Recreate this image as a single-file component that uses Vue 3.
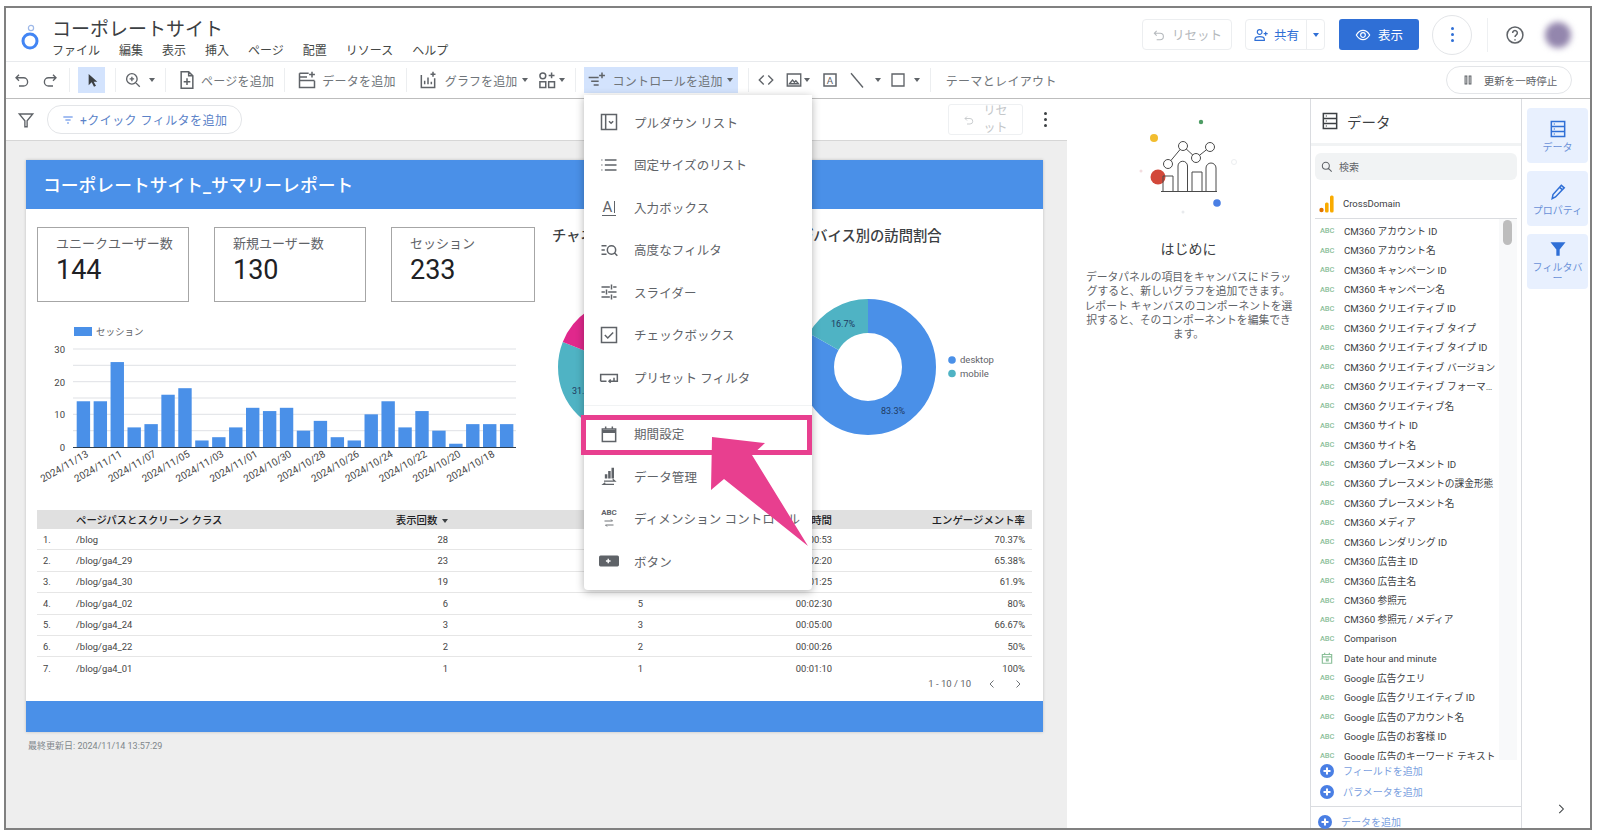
<template>
  <div class="page">
    <div class="frame">
      <header class="top">
        <svg class="logo" viewBox="0 0 24 32">
          <circle cx="12" cy="20" r="7" fill="none" stroke="#4285f4" stroke-width="3" />
          <circle cx="13" cy="7" r="2.600" fill="none" stroke="#9db8e8" stroke-width="1.200" />
        </svg>
        <div class="title-block">
          <div class="doc-title">コーポレートサイト</div>
          <nav class="menubar">
            <span v-for="m in menubar" :key="m">{{ m }}</span>
          </nav>
        </div>
        <div class="top-right">
          <div class="btn-ghost reset"><Ic n="undo" class="ic14" />リセット</div>
          <div class="btn-ghost share">
            <span class="share-main"><Ic n="personAdd" class="ic16" />共有</span>
            <span class="share-drop"><i class="caret blue"></i></span>
          </div>
          <div class="btn-view"><Ic n="eye" class="ic16" />表示</div>
          <div class="kebab-round"><span></span><span></span><span></span></div>
          <div class="top-sep"></div>
          <Ic n="help" class="ic20 help" />
          <div class="avatar"></div>
        </div>
      </header>

      <div class="toolbar">
        <Ic n="undo" class="ic18" />
        <Ic n="redo" class="ic18 ml10" />
        <i class="sep tight"></i>
        <div class="cursor-btn">
          <svg class="ic16" viewBox="0 0 24 24"><path d="M7 3v17l4.500-4.500L15 22l3-1.500-3.500-6H20z" fill="#3c4043" /></svg>
        </div>
        <i class="sep tight"></i>
        <Ic n="zoom" class="ic18" /><i class="caret ml7"></i>
        <i class="sep"></i>
        <Ic n="page" class="ic20 ml1" /><span class="tool-label near">ページを追加</span>
        <i class="sep"></i>
        <Ic n="data" class="ic20 ml2" /><span class="tool-label">データを追加</span>
        <i class="sep"></i>
        <Ic n="graph" class="ic20 ml1" /><span class="tool-label far">グラフを追加</span><i class="caret ml5"></i>
        <Ic n="community" class="ic20 ml9" /><i class="caret ml2"></i>
        <i class="sep tight"></i>
        <div class="control-btn">
          <Ic n="control" class="ic20" /><span class="tool-label">コントロールを追加</span><i class="caret ml4"></i>
        </div>
        <i class="sep tight"></i>
        <Ic n="code" class="ic18" />
        <Ic n="image" class="ic18 ml10" /><i class="caret ml1"></i>
        <svg class="ic18 ml11" viewBox="0 0 24 24">
          <path d="M4 4h16v16H4z" fill="none" stroke="#5f6368" stroke-width="2" />
          <text x="12" y="17" text-anchor="middle" font-size="13" fill="#5f6368">A</text>
        </svg>
        <Ic n="line" class="ic18 ml9" /><i class="caret ml9"></i>
        <Ic n="rect" class="ic18 ml8" /><i class="caret ml7"></i>
        <i class="sep"></i>
        <span class="theme-label">テーマとレイアウト</span>
        <div class="pause-btn"><Ic n="pause" class="ic14" /><span>更新を一時停止</span></div>
      </div>

      <div class="main">
        <div class="canvas-col">
          <div class="filter-bar">
            <Ic n="funnel" class="ic18 funnel" />
            <div class="quick-chip"><Ic n="filterLines" class="ic14 chip-ic" />+クイック フィルタを追加</div>
            <div class="filter-right">
              <div class="reset-small"><Ic n="undo" class="ic12" /><span>リセット</span></div>
              <div class="kebab-plain"><span></span><span></span><span></span></div>
            </div>
          </div>

          <div class="canvas">
            <section class="report">
              <div class="rep-head">コーポレートサイト_サマリーレポート</div>
              <div class="rep-top">
                <div class="rep-left">
                  <div class="cards">
                    <div v-for="c in cards" :key="c.label" class="card" :class="c.cls">
                      <div class="card-label">{{ c.label }}</div>
                      <div class="card-value">{{ c.value }}</div>
                    </div>
                  </div>
                  <svg class="bar-chart" viewBox="37 320 500 180">
                    <rect x="74" y="327" width="18" height="9" fill="#4a90e8" />
                    <text x="96" y="335" class="legend-t">セッション</text>
                    <line v-for="g in gridLines" :key="g" x1="73" x2="516" :y1="g" :y2="g" stroke="#dfe1e5" stroke-width="1" />
                    <text v-for="t in yTicks" :key="t.v" x="65" :y="t.y + 4" text-anchor="end" class="tick-t">{{ t.v }}</text>
                    <rect v-for="b in bars" :key="b.x" :x="b.x" :y="b.y" width="13.400" :height="b.h" fill="#4a90e8" />
                    <line x1="73" x2="516" y1="447.500" y2="447.500" stroke="#2d3e50" stroke-width="1" />
                    <text
                      v-for="l in xLabels"
                      :key="l.t"
                      :transform="`translate(${l.x} 456) rotate(-30)`"
                      text-anchor="end"
                      class="x-t"
                    >{{ l.t }}</text>
                  </svg>
                </div>
                <div class="donut-box first">
                  <div class="chart-title">チャネル別の訪問割合</div>
                  <svg class="donut" viewBox="552 290 247 160">
                    <g fill="none" stroke-width="34">
                      <circle v-for="s in leftSlices" :key="s.color" cx="626" cy="367" r="51" pathLength="100"
                        :stroke="s.color" :stroke-dasharray="`${s.size} ${100 - s.size}`" :stroke-dashoffset="-s.start"
                        transform="rotate(-90 626 367)" />
                    </g>
                    <text x="572" y="394" class="pct-t">31.7%</text>
                  </svg>
                </div>
                <div class="donut-box second">
                  <div class="chart-title">デバイス別の訪問割合</div>
                  <svg class="donut" viewBox="799 290 237 160">
                    <g fill="none" stroke-width="34">
                      <circle v-for="s in rightSlices" :key="s.color" cx="868" cy="367" r="51" pathLength="100"
                        :stroke="s.color" :stroke-dasharray="`${s.size} ${100 - s.size}`" :stroke-dashoffset="-s.start"
                        transform="rotate(-90 868 367)" />
                    </g>
                    <text x="831" y="327" class="pct-t">16.7%</text>
                    <text x="881" y="414" class="pct-t">83.3%</text>
                    <circle cx="952" cy="360" r="3.800" fill="#4a90e8" />
                    <circle cx="952" cy="373.500" r="3.800" fill="#4fb3c4" />
                    <text x="960" y="363" class="leg-t">desktop</text>
                    <text x="960" y="376.500" class="leg-t">mobile</text>
                  </svg>
                </div>
              </div>

              <div class="tbl">
                <div class="tr th">
                  <span></span>
                  <span>ページパスとスクリーン クラス</span>
                  <span class="num">表示回数 <i class="caret dark"></i></span>
                  <span class="num">セッション</span>
                  <span class="num">平均エンゲージメント時間</span>
                  <span class="num">エンゲージメント率</span>
                </div>
                <div v-for="(r, i) in rows" :key="r.path" class="tr">
                  <span>{{ i + 1 }}.</span>
                  <span>{{ r.path }}</span>
                  <span class="num">{{ r.views }}</span>
                  <span class="num">{{ r.sessions }}</span>
                  <span class="num">{{ r.time }}</span>
                  <span class="num">{{ r.rate }}</span>
                </div>
              </div>
              <div class="pager">
                <span>1 - 10 / 10</span>
                <Ic n="chevLeft" class="ic12 pg-l" />
                <Ic n="chevRight" class="ic12 pg-r" />
              </div>
              <div class="rep-foot"></div>
            </section>
            <div class="updated">最終更新日: 2024/11/14 13:57:29</div>
          </div>
        </div>

        <aside class="info-panel">
          <svg class="illus" viewBox="1071 105 244 110">
            <circle cx="1205" cy="122" r="2.200" fill="#4d9c64" />
            <circle cx="1158" cy="138" r="4" fill="#f2bd2f" />
            <circle cx="1162" cy="177" r="7.500" fill="#d2483a" />
            <circle cx="1221" cy="203" r="3.800" fill="#4a7fe4" />
            <circle cx="1145" cy="171" r="1.500" fill="#f3dde0" />
            <circle cx="1187" cy="212" r="1.500" fill="#e8eaed" />
            <circle cx="1238" cy="162" r="2.500" fill="none" stroke="#eceef0" />
            <g fill="none" stroke="#4a4a4a" stroke-width="1">
              <path d="M1167 191v-15h10v15M1182 191v-25a4.500 4.500 0 0 1 9.500 0v25M1196 191v-19h10v19M1210 191v-23a4.500 4.500 0 0 1 10 0v23" />
              <path d="M1165 191.500h56" />
              <path d="M1172 164l15-18 13 12 14-11" />
              <circle cx="1172" cy="164" r="4.500" fill="#fff" />
              <circle cx="1187" cy="146" r="4.500" fill="#fff" />
              <circle cx="1200" cy="158" r="4.500" fill="#fff" />
              <circle cx="1214" cy="147" r="4.500" fill="#fff" />
            </g>
          </svg>
          <h3 class="info-title">はじめに</h3>
          <p class="info-text">データパネルの項目をキャンバスにドラッグすると、新しいグラフを追加できます。レポート キャンバスのコンポーネントを選択すると、そのコンポーネントを編集できます。</p>
        </aside>

        <aside class="data-panel">
          <div class="dp-head"><Ic n="table" class="ic20" /><span>データ</span></div>
          <div class="dp-search"><Ic n="search" class="ic14" /><span>検索</span></div>
          <div class="dp-source">
            <svg class="ga" viewBox="0 0 16 18">
              <circle cx="2.500" cy="15" r="2.200" fill="#e37400" />
              <rect x="6" y="7.500" width="3.600" height="10" rx="1.500" fill="#f9ab00" />
              <rect x="11" y="0.500" width="3.600" height="17" rx="1.500" fill="#f9ab00" />
            </svg>
            <span>CrossDomain</span>
          </div>
          <div class="dp-list">
            <div class="dp-rows">
              <div v-for="f in fields" :key="f" class="dp-row">
                <svg v-if="f.startsWith('Date')" class="cal" viewBox="0 0 24 24">
                  <path d="M4 6h16v15H4zM4 10h16M8 3v4M16 3v4M11 14h3v3h-3z" fill="none" stroke="#8cc09a" stroke-width="2" />
                </svg>
                <span v-else class="abc">ABC</span>
                <span class="dp-name">{{ f }}</span>
              </div>
            </div>
            <div class="dp-track"><div class="dp-thumb"></div></div>
          </div>
          <div class="dp-adds">
            <div v-for="a in ['フィールドを追加', 'パラメータを追加']" :key="a" class="dp-add">
              <svg class="add-ic" viewBox="0 0 24 24"><circle cx="12" cy="12" r="12" fill="#4a7fe4" /><path d="M12 6v12M6 12h12" stroke="#fff" stroke-width="3.500" /></svg>
              {{ a }}
            </div>
          </div>
          <div class="dp-foot">
            <svg class="add-ic" viewBox="0 0 24 24"><circle cx="12" cy="12" r="12" fill="#4a7fe4" /><path d="M12 6v12M6 12h12" stroke="#fff" stroke-width="3.500" /></svg>
            データを追加
          </div>
        </aside>

        <aside class="rail">
          <div class="rail-btn"><Ic n="table" class="ic20" /><span>データ</span></div>
          <div class="rail-btn"><Ic n="pencil" class="ic20" /><span>プロパティ</span></div>
          <div class="rail-btn">
            <svg class="ic20" viewBox="0 0 24 24"><path d="M3 4h18l-7 8.500V20h-4v-7.500z" fill="#2f6fd6" /></svg>
            <span>フィルタバー</span>
          </div>
          <Ic n="chevRight" class="ic14 rail-chev" />
        </aside>
      </div>

      <div class="dd-menu">
        <template v-for="(g, gi) in menuGroups" :key="gi">
          <div v-if="gi" class="dd-div"></div>
          <div v-for="item in g" :key="item.t" class="dd-item">
            <span class="dd-icon">
              <span v-if="item.kind === 'a'" class="glyph-a">A</span>
              <span v-else-if="item.kind === 'abc'" class="glyph-abc">ABC<Ic n="swap" class="swap" /></span>
              <svg v-else-if="item.kind === 'btn'" class="btn-glyph" viewBox="0 0 26 16">
                <rect width="26" height="14" y="1" rx="2" fill="#5f6368" />
                <path d="M9 8h6M12 5v6" stroke="#fff" stroke-width="1.800" />
              </svg>
              <svg v-else-if="item.kind === 'mgmt'" class="ic20" viewBox="0 0 24 24">
                <path d="M7 10h3v5H7zM11 6h3v9h-3zM15 2h3v13h-3z" fill="#5f6368" />
                <path d="M6 18h13l-2.500-2M18 22H5l2.500-2" fill="none" stroke="#5f6368" stroke-width="1.500" />
              </svg>
              <Ic v-else :n="item.kind" class="ic20" />
            </span>
            <span class="dd-text">{{ item.t }}</span>
          </div>
        </template>
      </div>
    </div>

    <svg class="annot" viewBox="0 0 1600 837">
      <rect x="583.500" y="417.500" width="226" height="35" fill="none" stroke="#e83f8f" stroke-width="5" />
      <path d="M712 437l53 6-13 12 56 91-84-67-13 11z" fill="#e83f8f" />
    </svg>
  </div>
</template>

<script setup>
import { h } from 'vue';

const icons = {
  undo: 'M8 5 4 9l4 4M4 9h10a5.500 5.500 0 0 1 0 11H8',
  redo: 'M16 5l4 4-4 4M20 9H10a5.500 5.500 0 0 0 0 11h6',
  zoom: 'M10.500 3.500a7 7 0 1 0 0 14 7 7 0 0 0 0-14zM15.500 15.500 21 21M10.500 7.500v6M7.500 10.500h6',
  page: 'M5 2h9l5 5v15H5zM14 2v5h5M12 10v8M8 14h8',
  data: 'M3 4h11M3 4v17h18v-8M3 12.500h18M18 2v7M14.500 5.500h7M3 8.500h9',
  graph: 'M4 6v15h16V10M8 17v-4M12 17V9M16 17v-3M18 2v6M15 5h6',
  community: 'M7 3.500a3.500 3.500 0 1 0 0 7 3.500 3.500 0 0 0 0-7zM17.500 3v7M14 6.500h7M3.500 14h7v7h-7zM14 14h7v7h-7z',
  control: 'M2 9h12M5 13.500h9M8 18h6M18 3v7M14.500 6.500h7',
  code: 'M9 6l-6 6 6 6M15 6l6 6-6 6',
  image: 'M3 4h18v16H3zM6 17l4-5 2.500 3 2-2 3.500 4z',
  line: 'M4 3l16 19',
  rect: 'M4 4h16v16H4z',
  pause: 'M7 5h3v14H7zM14 5h3v14h-3z',
  funnel: 'M3 4h18l-7.500 9v8h-3v-8z',
  filterLines: 'M4 7h16M7.500 12h9M10.500 17h3',
  personAdd: 'M10 4a3.500 3.500 0 1 0 0 7 3.500 3.500 0 0 0 0-7zM3 20v-1.500c0-2.500 3.500-4 7-4s7 1.500 7 4V20zM19 7v6M16 10h6',
  eye: 'M2 12s4-7 10-7 10 7 10 7-4 7-10 7S2 12 2 12zM12 8.500a3.500 3.500 0 1 0 0 7 3.500 3.500 0 0 0 0-7z',
  help: 'M12 2.500a9.500 9.500 0 1 0 0 19 9.500 9.500 0 0 0 0-19zM9.200 9.500a2.800 2.800 0 1 1 4.400 2.300c-1 .7-1.600 1.300-1.600 2.700M12 17v1.500',
  search: 'M10 4a6 6 0 1 0 0 12 6 6 0 0 0 0-12zM14.500 14.500 20 20',
  table: 'M4 3h16v18H4zM4 9h16M4 15h16M7 6h1M7 12h1M7 18h1',
  pencil: 'M5 20l1-5L16 4l3.500 3L9 18zM14 6.500l3.500 3',
  chevRight: 'M9 5l7 7-7 7',
  chevLeft: 'M15 5l-7 7 7 7',
  dropdown: 'M3 3h18v18H3zM8 3v18M12 11l2.500 2.500 2.500-2.500',
  list: 'M3 6h1M3 12h1M3 18h1M7 6h14M7 12h14M7 18h14',
  advanced: 'M3 7h6M3 12h4M3 17h6M15 7a5 5 0 1 0 0 10 5 5 0 0 0 0-10zM19 16l3 3',
  slider: 'M3 6h10M17 6h4M15 3v6M3 12h4M11 12h10M9 9v6M3 18h10M17 18h4M15 15v6',
  check: 'M3 3h18v18H3zM7 12l3.500 3.500L17 9',
  preset: 'M2 17V9h20v8h-6M9 17H2M18 13v4h-6M14 15l-2 2 2 2',
  calendar: 'M4 6h16v15H4zM4 10h16M8 3v4M16 3v4M4 8h16',
  swap: 'M3 8h16l-3-3M21 16H5l3 3',
};

const Ic = (props) =>
  h('svg', { class: 'ic', viewBox: '0 0 24 24' }, h('path', { d: icons[props.n] }));
Ic.props = ['n'];

const menubar = ['ファイル', '編集', '表示', '挿入', 'ページ', '配置', 'リソース', 'ヘルプ'];

const cards = [
  { label: 'ユニークユーザー数', value: '144', cls: 'c1' },
  { label: '新規ユーザー数', value: '130', cls: 'c2' },
  { label: 'セッション', value: '233', cls: 'c3' },
];

const values = [14, 14, 26, 6, 7, 16, 18, 2, 3, 6, 12, 11, 12, 5, 8, 3, 2, 10, 14, 6, 11, 5, 1, 7, 7, 7];
const unit = 98 / 30;
const bars = values.map((v, i) => ({ x: 76.7 + i * 16.93, y: 447 - v * unit, h: v * unit }));
const gridLines = [349, 365.3, 381.7, 398, 414.3, 430.7];
const yTicks = [
  { v: 30, y: 349 },
  { v: 20, y: 381.7 },
  { v: 10, y: 414.3 },
  { v: 0, y: 447 },
];
const xLabels = ['2024/11/13', '2024/11/11', '2024/11/07', '2024/11/05', '2024/11/03', '2024/11/01', '2024/10/30', '2024/10/28', '2024/10/26', '2024/10/24', '2024/10/22', '2024/10/20', '2024/10/18']
  .map((t, i) => ({ t, x: 89 + i * 33.86 }));

const leftSlices = [
  { color: '#4a90e8', start: 0, size: 49.3 },
  { color: '#4fb3c4', start: 49.3, size: 31.7 },
  { color: '#e0288c', start: 81, size: 19 },
];
const rightSlices = [
  { color: '#4a90e8', start: 0, size: 83.3 },
  { color: '#4fb3c4', start: 83.3, size: 16.7 },
];

const rows = [
  { path: '/blog', views: 28, sessions: 27, time: '00:00:53', rate: '70.37%' },
  { path: '/blog/ga4_29', views: 23, sessions: 26, time: '00:02:20', rate: '65.38%' },
  { path: '/blog/ga4_30', views: 19, sessions: 21, time: '00:01:25', rate: '61.9%' },
  { path: '/blog/ga4_02', views: 6, sessions: 5, time: '00:02:30', rate: '80%' },
  { path: '/blog/ga4_24', views: 3, sessions: 3, time: '00:05:00', rate: '66.67%' },
  { path: '/blog/ga4_22', views: 2, sessions: 2, time: '00:00:26', rate: '50%' },
  { path: '/blog/ga4_01', views: 1, sessions: 1, time: '00:01:10', rate: '100%' },
];

const fields = [
  'CM360 アカウント ID', 'CM360 アカウント名', 'CM360 キャンペーン ID', 'CM360 キャンペーン名',
  'CM360 クリエイティブ ID', 'CM360 クリエイティブ タイプ', 'CM360 クリエイティブ タイプ ID',
  'CM360 クリエイティブ バージョン', 'CM360 クリエイティブ フォーマ…', 'CM360 クリエイティブ名',
  'CM360 サイト ID', 'CM360 サイト名', 'CM360 プレースメント ID', 'CM360 プレースメントの課金形態',
  'CM360 プレースメント名', 'CM360 メディア', 'CM360 レンダリング ID', 'CM360 広告主 ID', 'CM360 広告主名',
  'CM360 参照元', 'CM360 参照元 / メディア', 'Comparison', 'Date hour and minute', 'Google 広告クエリ',
  'Google 広告クリエイティブ ID', 'Google 広告のアカウント名', 'Google 広告のお客様 ID', 'Google 広告のキーワード テキスト',
];

const menuGroups = [
  [
    { t: 'プルダウン リスト', kind: 'dropdown' },
    { t: '固定サイズのリスト', kind: 'list' },
    { t: '入力ボックス', kind: 'a' },
    { t: '高度なフィルタ', kind: 'advanced' },
    { t: 'スライダー', kind: 'slider' },
    { t: 'チェックボックス', kind: 'check' },
    { t: 'プリセット フィルタ', kind: 'preset' },
  ],
  [
    { t: '期間設定', kind: 'calendar' },
    { t: 'データ管理', kind: 'mgmt' },
    { t: 'ディメンション コントロール', kind: 'abc' },
    { t: 'ボタン', kind: 'btn' },
  ],
];
</script>

<style>
body { margin: 0; background: #fff; }
.ic { fill: none; stroke: currentColor; stroke-width: 1.800; flex-shrink: 0; display: block; }
.ic12 { width: 12px; height: 12px; }
.ic14 { width: 14px; height: 14px; }
.ic16 { width: 16px; height: 16px; }
.ic18 { width: 18px; height: 18px; }
.ic20 { width: 20px; height: 20px; }
.ml1 { margin-left: 1px; }
.ml2 { margin-left: 2px; }
.ml8 { margin-left: 8px; }
.ml9 { margin-left: 9px; }
.ml10 { margin-left: 10px; }
.ml11 { margin-left: 11px; }
</style>

<style scoped>
.page {
  position: relative;
  width: 1600px;
  height: 837px;
  padding: 6px 8px 7px 4px;
  box-sizing: border-box;
  font-family: Roboto, "Noto Sans CJK JP", sans-serif;
  color: #3c4043;
  overflow: hidden;
}
.frame {
  position: relative;
  height: 100%;
  border: 2px solid #808080;
  box-sizing: border-box;
  display: flex;
  flex-direction: column;
  background: #fff;
}

/* header */
.top { height: 54px; flex-shrink: 0; display: flex; align-items: center; border-bottom: 1px solid #e8eaed; box-sizing: border-box; }
.logo { width: 24px; height: 32px; margin-left: 12px; margin-top: 4px; }
.title-block { margin-left: 10px; padding-top: 7px; }
.doc-title { font-size: 19px; line-height: 27px; color: #3c4043; }
.menubar { display: flex; gap: 19px; font-size: 12px; line-height: 17px; color: #444746; }
.top-right { margin-left: auto; display: flex; align-items: center; height: 100%; }
.btn-ghost { height: 31px; border: 1px solid #eceef0; border-radius: 4px; display: flex; align-items: center; font-size: 12.500px; box-sizing: border-box; }
.reset { width: 90px; justify-content: center; gap: 6px; color: #b4b8bc; }
.share { width: 80px; margin-left: 13px; color: #2f6fd6; }
.share-main { flex: 1; display: flex; align-items: center; justify-content: center; gap: 5px; }
.share-drop { width: 17px; height: 100%; border-left: 1px solid #eceef0; display: flex; align-items: center; justify-content: center; }
.btn-view { width: 80px; height: 31px; margin-left: 14px; background: #2f6fd6; color: #fff; border-radius: 3px; display: flex; align-items: center; justify-content: center; gap: 7px; font-size: 12.500px; }
.kebab-round { width: 40px; height: 40px; margin-left: 13px; border: 1px solid #e3e5e8; border-radius: 50%; box-sizing: border-box; display: flex; flex-direction: column; align-items: center; justify-content: center; gap: 3px; }
.kebab-round span { width: 3px; height: 3px; border-radius: 50%; background: #2f6fd6; }
.top-sep { width: 1px; height: 34px; background: #eef0f2; margin-left: 15px; }
.help { margin-left: 17px; color: #5f6368; }
.avatar { width: 26px; height: 26px; margin: 0 19px 0 20px; border-radius: 50%; background: #9386ad; filter: blur(3px); }

/* toolbar */
.toolbar { height: 37px; flex-shrink: 0; display: flex; align-items: center; padding-left: 7px; border-bottom: 1px solid #bdbdbd; box-sizing: border-box; color: #5f6368; }
.sep { width: 1px; height: 24px; background: #eceef0; margin: 0 10px; flex-shrink: 0; }
.sep.tight { margin-right: 8px; }
.caret { width: 0; height: 0; border-left: 3px solid transparent; border-right: 3px solid transparent; border-top: 4px solid #5f6368; display: inline-block; flex-shrink: 0; }
.caret.blue { border-top-color: #2f6fd6; }
.caret.dark { border-top-color: #3c4043; vertical-align: middle; margin-left: 2px; }
.caret.ml1 { margin-left: 1px; }
.caret.ml2 { margin-left: 2px; }
.ml4 { margin-left: 4px; }
.ml5 { margin-left: 5px; }
.ml7 { margin-left: 7px; }
.caret.ml9 { margin-left: 9px; }
.cursor-btn { width: 27px; height: 26px; background: #d3e3fd; display: flex; align-items: center; justify-content: center; }
.tool-label { font-size: 12px; letter-spacing: .25px; margin-left: 5px; white-space: nowrap; color: #70757a; }
.tool-label.near { margin-left: 4px; }
.tool-label.far { margin-left: 7px; letter-spacing: .1px; }
.control-btn { height: 26px; padding: 0 5px 0 3px; background: #d3e3fd; display: flex; align-items: center; }
.theme-label { font-size: 12px; letter-spacing: .35px; color: #70757a; margin-left: 5px; }
.pause-btn { margin-left: auto; margin-right: 18px; width: 126px; height: 28px; border: 1px solid #e3e5e8; border-radius: 14px; box-sizing: border-box; display: flex; align-items: center; justify-content: center; gap: 9px; font-size: 10.500px; color: #5f6368; }

/* main */
.main { flex: 1; display: flex; min-height: 0; }
.canvas-col { width: 1061px; flex-shrink: 0; display: flex; flex-direction: column; }
.filter-bar { height: 42px; flex-shrink: 0; display: flex; align-items: center; border-bottom: 1px solid #d6d6d6; box-sizing: border-box; }
.funnel { margin-left: 11px; color: #5f6368; }
.quick-chip { height: 27px; margin-left: 12px; padding: 0 14px 0 13px; border: 1px solid #e3e5e8; border-radius: 14px; display: flex; align-items: center; gap: 5px; font-size: 12px; letter-spacing: .45px; color: #5b82c8; }
.chip-ic { color: #4a7fe4; }
.filter-right { margin-left: auto; display: flex; align-items: center; }
.reset-small { width: 75px; height: 31px; border: 1px solid #eef0f2; border-radius: 3px; box-sizing: border-box; display: flex; align-items: center; justify-content: center; gap: 8px; color: #c4c7ca; font-size: 12px; line-height: 17px; text-align: center; }
.reset-small span { width: 26px; }
.kebab-plain { width: 20px; margin: 0 12px 0 12px; display: flex; flex-direction: column; align-items: center; gap: 3px; }
.kebab-plain span { width: 3px; height: 3px; border-radius: 50%; background: #3c4043; }
.canvas { flex: 1; background: #eeeeee; padding: 19px 0 0 20px; min-height: 0; }

/* report */
.report { width: 1017px; height: 572px; background: #fff; box-shadow: 0 0 3px rgba(0, 0, 0, .2); display: flex; flex-direction: column; }
.rep-head { height: 49px; flex-shrink: 0; background: #4a90e8; color: #fff; font-size: 17.800px; font-weight: 500; line-height: 52px; padding-left: 17px; white-space: nowrap; }
.rep-top { height: 301px; flex-shrink: 0; display: flex; }
.rep-left { width: 526px; flex-shrink: 0; padding: 18px 0 0 11px; box-sizing: border-box; }
.cards { display: flex; }
.card { width: 152px; height: 75px; border: 1px solid #a6a6a6; box-sizing: border-box; padding: 7px 0 0 18px; }
.c2 { margin-left: 25px; }
.c3 { margin-left: 25px; width: 144px; }
.card-label { font-size: 13px; line-height: 18px; color: #5f6368; }
.card-value { font-size: 27px; line-height: 34px; color: #202124; }
.bar-chart { display: block; width: 500px; height: 180px; margin-top: 18px; }
.legend-t { font-size: 9.500px; fill: #5f6368; }
.tick-t { font-size: 9.500px; fill: #444; }
.x-t { font-size: 10px; fill: #444; }
.donut-box { flex-shrink: 0; }
.first { width: 247px; }
.second { width: 237px; }
.chart-title { margin-top: 17px; height: 20px; font-size: 14.300px; line-height: 20px; font-weight: 500; color: #3c4043; white-space: nowrap; }
.donut { display: block; margin-top: 44px; height: 160px; width: 100%; }
.pct-t { font-size: 9px; fill: #1f3a5f; }
.leg-t { font-size: 9.500px; fill: #5f6368; }

.tbl { margin-left: 11px; width: 995px; }
.tr { display: grid; grid-template-columns: 39px 180px 192px 195px 189px 193px; padding-right: 7px; height: 21.400px; align-items: center; font-size: 9.400px; color: #444; border-bottom: 1px solid #e6e6e6; box-sizing: border-box; white-space: nowrap; }
.tr:last-child { border-bottom: 0; }
.tr > span:first-child { padding-left: 6px; }
.th { height: 19px; background: #e0e0e0; font-size: 10.400px; font-weight: 500; color: #202124; border: 0; }
.num { text-align: right; }
.pager { height: 14px; display: flex; align-items: center; justify-content: flex-end; padding-right: 19px; font-size: 9.500px; color: #5f6368; margin-top: -2px; }
.pg-l { margin-left: 15px; }
.pg-r { margin-left: 14px; }
.rep-foot { margin-top: auto; height: 31px; flex-shrink: 0; background: #4a90e8; }
.updated { margin: 7px 0 0 2px; font-size: 9px; color: #80868b; }

/* start panel */
.info-panel { width: 243px; flex-shrink: 0; text-align: center; }
.illus { display: block; width: 244px; height: 110px; margin-top: 6px; }
.info-title { margin: 24px 0 0; font-size: 14px; line-height: 20px; font-weight: 400; color: #3c4043; }
.info-text { width: 212px; margin: 12px auto 0; font-size: 10.800px; line-height: 14.300px; color: #5f6368; }

/* data panel */
.data-panel { width: 212px; flex-shrink: 0; border-left: 1px solid #dadce0; border-right: 1px solid #dadce0; box-sizing: border-box; display: flex; flex-direction: column; min-height: 0; }
.dp-head { height: 47px; flex-shrink: 0; display: flex; align-items: center; gap: 7px; padding-left: 9px; border-bottom: 3px solid #f1f3f4; box-sizing: border-box; font-size: 14.500px; color: #3c4043; }
.dp-search { height: 27px; flex-shrink: 0; margin: 7px 4px 0; background: #f1f3f4; border-radius: 6px; display: flex; align-items: center; gap: 5px; padding-left: 5px; font-size: 10px; color: #5f6368; }
.dp-source { height: 29px; flex-shrink: 0; margin: 9px 4px 0; display: flex; align-items: center; gap: 8px; padding-left: 4px; font-size: 9.500px; border-bottom: 1px solid #dadce0; }
.ga { width: 16px; height: 18px; }
.dp-list { flex: 1; display: flex; min-height: 0; overflow: hidden; }
.dp-rows { flex: 1; min-width: 0; padding-top: 2px; overflow: hidden; }
.dp-row { height: 19.450px; display: flex; align-items: center; font-size: 9.700px; color: #3c4043; padding-left: 9px; white-space: nowrap; }
.abc { width: 24px; flex-shrink: 0; font-size: 7.500px; font-weight: 500; letter-spacing: -.1px; color: #8cc09a; }
.cal { width: 14px; height: 14px; margin-right: 10px; flex-shrink: 0; }
.dp-name { min-width: 0; }
.dp-track { width: 18px; margin-right: 4px; flex-shrink: 0; background: #f8f9fa; padding-top: 1px; box-sizing: border-box; }
.dp-thumb { width: 9px; height: 25px; margin-left: 4px; border-radius: 5px; background: #bdbdbd; }
.dp-adds { height: 47px; flex-shrink: 0; margin-top: -1px; border-bottom: 1px solid #dadce0; box-sizing: border-box; background: #fff; position: relative; }
.dp-add { height: 21px; display: flex; align-items: center; gap: 9px; padding-left: 9px; font-size: 10px; color: #7b9fe0; }
.add-ic { width: 14px; height: 14px; flex-shrink: 0; }
.dp-foot { height: 21px; flex-shrink: 0; display: flex; align-items: center; gap: 9px; padding: 8px 0 0 7px; box-sizing: border-box; font-size: 10px; color: #7b9fe0; }

/* rail */
.rail { flex: 1; position: relative; padding: 9px 2px 0 5px; box-sizing: border-box; }
.rail-btn { height: 55px; margin-bottom: 8px; background: #e8f0fe; border-radius: 4px; display: flex; flex-direction: column; align-items: center; justify-content: center; gap: 3px; color: #2f6fd6; font-size: 10px; line-height: 11px; text-align: center; }
.rail-btn span { color: #6a90d8; width: 54px; }
.rail-chev { position: absolute; right: 22px; bottom: 12px; color: #3c4043; }

/* menu */
.dd-menu { position: absolute; left: 578px; top: 87px; width: 228px; padding: 6px 0 7px; background: #fff; border-radius: 0 0 4px 4px; box-shadow: 0 2px 8px rgba(0, 0, 0, .3); box-sizing: border-box; }
.dd-item { height: 42.500px; display: flex; align-items: center; }
.dd-div { height: 1px; background: #f1f3f4; margin: 6px 0 7px; }
.dd-icon { width: 50px; display: flex; align-items: center; justify-content: center; color: #5f6368; flex-shrink: 0; }
.dd-text { font-size: 12.500px; letter-spacing: .1px; color: #5f6368; white-space: nowrap; }
.glyph-a { font-size: 15px; line-height: 16px; border-bottom: 1.500px solid #5f6368; padding: 0 1px 0 1px; color: #5f6368; display: flex; align-items: center; }
.glyph-a::after { content: ''; width: 1px; height: 12px; margin-left: 2px; background: #5f6368; }
.glyph-abc { font-size: 8px; font-weight: 700; line-height: 9px; display: flex; flex-direction: column; align-items: center; }
.swap { width: 16px; height: 12px; }
.btn-glyph { width: 20px; height: 14px; }

.annot { position: absolute; left: 0; top: 0; width: 1600px; height: 837px; pointer-events: none; }
</style>
